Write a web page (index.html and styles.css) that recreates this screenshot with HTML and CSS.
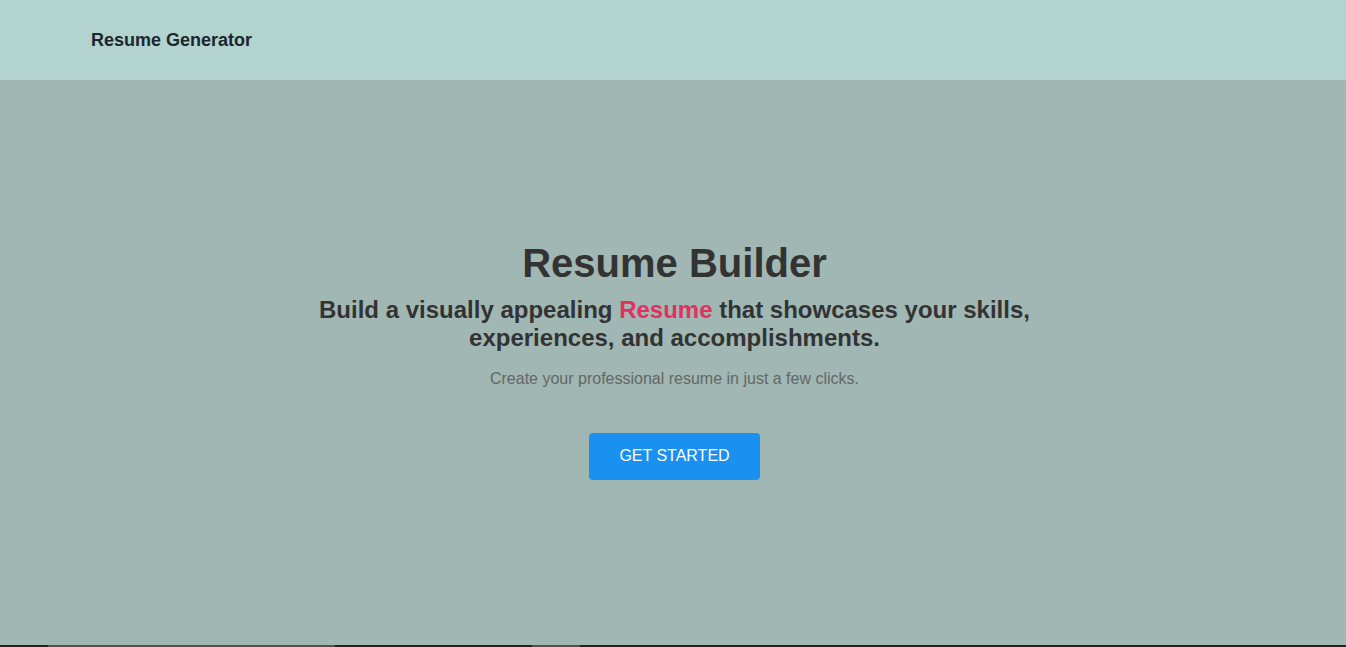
FILE: index.html
```html
<!DOCTYPE html>
<html lang="en">
<head>
<meta charset="utf-8">
<title>Resume Generator</title>
<link rel="stylesheet" href="styles.css">
</head>
<body>
<div class="page">
  <header class="topbar">
    <div class="brand">Resume Generator</div>
  </header>
  <main class="hero">
    <h1 class="hero-title">Resume Builder</h1>
    <h2 class="hero-sub">Build a visually appealing <span class="accent">Resume</span> that showcases your skills, experiences, and accomplishments.</h2>
    <p class="hero-desc">Create your professional resume in just a few clicks.</p>
    <button class="cta">GET STARTED</button>
  </main>
  <div class="bottom-strip">
    <span class="seg dark s1"></span>
    <span class="seg light s2"></span>
    <span class="seg dark s3"></span>
    <span class="seg light s4"></span>
    <span class="seg dark s5"></span>
  </div>
</div>
</body>
</html>
```
FILE: styles.css
```css
* { box-sizing: border-box; }
html, body { margin: 0; padding: 0; }
body {
  font-family: "Liberation Sans", Arial, sans-serif;
  background: #a0b7b3;
}
.page {
  height: 647px;
  display: flex;
  flex-direction: column;
  overflow: hidden;
}
.topbar {
  height: 80px;
  background: #b2d3ce;
  display: flex;
  align-items: center;
  padding-left: 91px;
  flex-shrink: 0;
}
.brand {
  font-size: 18px;
  font-weight: 700;
  color: #1c2630;
  padding-top: 1px;
}
.hero {
  flex: 1;
  display: flex;
  flex-direction: column;
  align-items: center;
  justify-content: center;
  text-align: center;
  background: #a0b7b3;
  padding-bottom: 6px;
  padding-left: 3px;
}
.hero-title {
  margin: 0;
  font-size: 40px;
  font-weight: 700;
  color: #333333;
  line-height: 46px;
}
.hero-sub {
  margin: 10px 0 0;
  max-width: 800px;
  font-size: 24px;
  font-weight: 700;
  color: #333333;
  line-height: 28px;
}
.accent { color: #e0325f; }
.hero-desc {
  margin: 17px 0 0;
  font-size: 16px;
  color: #666666;
  line-height: 20px;
}
.cta {
  margin-top: 44px;
  width: 171px;
  height: 47px;
  border: none;
  border-radius: 4px;
  background: #1a91f0;
  color: #ffffff;
  font-family: "Liberation Sans", Arial, sans-serif;
  font-size: 16px;
  letter-spacing: 0;
  cursor: pointer;
}
.bottom-strip {
  height: 2px;
  display: flex;
  flex-shrink: 0;
}
.seg { height: 2px; display: block; }
.dark { background: #1d2523; }
.light { background: #4b5351; }
.s1 { width: 48px; }
.s2 { width: 287px; }
.s3 { width: 197px; }
.s4 { width: 48px; }
.s5 { flex: 1; }
```
